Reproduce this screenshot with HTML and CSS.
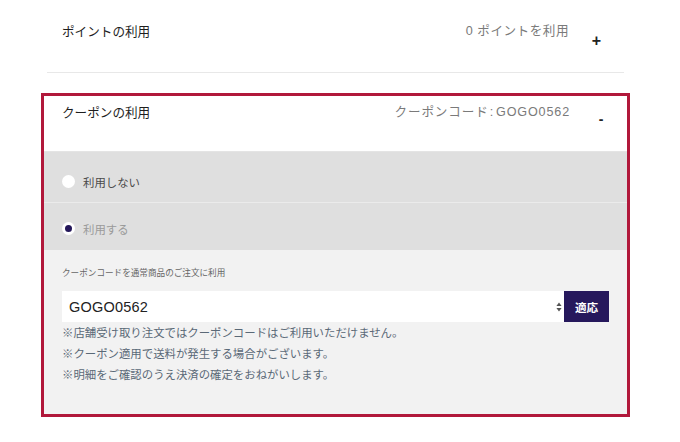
FILE: index.html
```html
<!DOCTYPE html>
<html lang="ja">
<head>
<meta charset="utf-8">
<title>クーポンの利用</title>
<link rel="stylesheet" href="styles.css">
</head>
<body>
<div class="wrap">
  <div class="points">
    <div class="row-title">ポイントの利用</div>
    <div class="row-value">0 ポイントを利用</div>
    <div class="toggle plus">+</div>
  </div>

  <div class="coupon">
    <div class="coupon-head">
      <div class="row-title">クーポンの利用</div>
      <div class="row-value wide">クーポンコード<span class="colon">:</span>GOGO0562</div>
      <div class="toggle minus">-</div>
    </div>

    <div class="opt opt-first">
      <span class="radio"></span>
      <span class="opt-label">利用しない</span>
    </div>
    <div class="opt opt-second">
      <span class="radio checked"></span>
      <span class="opt-label dim">利用する</span>
    </div>

    <div class="code-area">
      <div class="code-label">クーポンコードを通常商品のご注文に利用</div>
      <div class="code-row">
        <div class="code-input">
          <span class="code-text">GOGO0562</span>
          <span class="spin">
            <svg width="6" height="10" viewBox="0 0 6 10"><path d="M3 0.5 L5.6 4 L0.4 4 Z M3 9.5 L5.6 6 L0.4 6 Z" fill="#555"/></svg>
          </span>
        </div>
        <div class="apply">適応</div>
      </div>
      <p class="note">※店舗受け取り注文ではクーポンコードはご利用いただけません。</p>
      <p class="note">※クーポン適用で送料が発生する場合がございます。</p>
      <p class="note">※明細をご確認のうえ決済の確定をおねがいします。</p>
    </div>
  </div>
</div>
</body>
</html>
```

FILE: styles.css
```css
* { box-sizing: border-box; }
html, body {
  margin: 0;
  padding: 0;
  background: #ffffff;
}
body {
  font-family: "Noto Sans CJK JP", "Liberation Sans", sans-serif;
  color: #333;
}
.wrap {
  padding-left: 41px;
  width: 630px;
}
.points {
  margin: 0 6px;
  height: 73px;
  border-bottom: 1px solid #e8e8e8;
  display: flex;
  align-items: flex-start;
  padding: 22px 0 0 15px;
}
.row-title {
  flex: 1;
  font-size: 12.6px;
  line-height: 18px;
  color: #1e1e1e;
  font-weight: 400;
}
.row-value {
  font-family: "Liberation Sans", "Noto Sans CJK JP", sans-serif;
  font-size: 12.6px;
  line-height: 18px;
  color: #7a7a7a;
  letter-spacing: 0.5px;
}
.row-value.wide {
  letter-spacing: 0.85px;
}
.colon {
  margin: 0 2px 0 1px;
}
.toggle {
  font-family: "Liberation Sans", sans-serif;
  font-weight: bold;
  color: #222;
  text-align: center;
}
.plus {
  width: 55px;
  font-size: 16px;
  line-height: 18px;
  margin-top: 10px;
}
.minus {
  width: 57px;
  padding-left: 5px;
  font-size: 14px;
  line-height: 18px;
  margin-top: 7px;
}
.coupon {
  margin-top: 20px;
  border: 3px solid #b1183b;
  width: 589px;
}
.coupon-head {
  height: 56px;
  display: flex;
  align-items: flex-start;
  padding: 7px 0 0 18px;
  background: #fff;
  border-bottom: 1px solid #e4e4e4;
}
.opt {
  display: flex;
  align-items: center;
  background: #dfdfdf;
  padding-left: 18px;
}
.opt-first {
  height: 51px;
  padding-top: 9px;
  border-bottom: 1px solid #ebebeb;
}
.opt-second {
  height: 47px;
  padding-top: 4px;
}
.radio {
  width: 13px;
  height: 13px;
  border-radius: 50%;
  background: #fff;
  display: flex;
  align-items: center;
  justify-content: center;
  margin-right: 8px;
  flex: none;
}
.radio.checked::after {
  content: "";
  width: 7px;
  height: 7px;
  border-radius: 50%;
  background: #24175a;
}
.opt-label {
  font-size: 11.4px;
  line-height: 16px;
  color: #4a4a4a;
}
.opt-label.dim {
  color: #9a9a9a;
}
.code-area {
  background: #f2f2f2;
  padding: 16px 17px 29px 18px;
}
.code-label {
  font-size: 8.6px;
  line-height: 12px;
  color: #666;
}
.code-row {
  display: flex;
  margin-top: 13px;
  height: 31px;
}
.code-input {
  width: 502px;
  background: #fff;
  display: flex;
  align-items: center;
  padding-left: 7px;
  padding-right: 2px;
}
.code-text {
  flex: 1;
  font-family: "Liberation Sans", sans-serif;
  font-size: 14.5px;
  color: #222;
  letter-spacing: 0.2px;
}
.spin {
  display: flex;
  align-items: center;
}
.apply {
  width: 45px;
  background: #26185c;
  color: #fff;
  font-size: 11.6px;
  font-weight: bold;
  display: flex;
  align-items: center;
  justify-content: center;
}
.note {
  margin: 0;
  font-size: 11.4px;
  line-height: 21px;
  color: #5a6977;
}
```
